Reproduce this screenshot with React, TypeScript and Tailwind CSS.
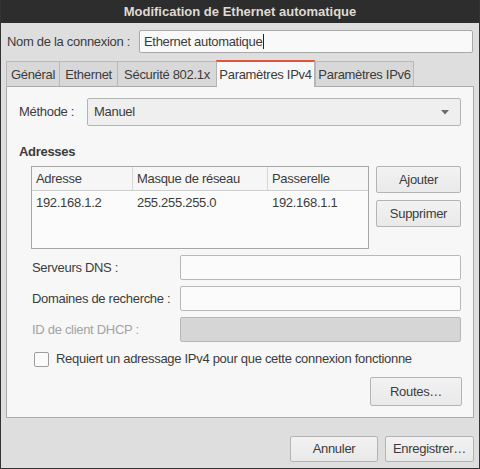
const font = { fontFamily: '"Liberation Sans", Arial, sans-serif' };

function Tab({ label, width, active }: { label: string; width: string; active?: boolean }) {
  if (active) {
    return (
      <div
        className={`${width} h-[27px] -mb-px flex items-center justify-center border-x border-t-2 border-x-[#b4b4b4] border-t-[#e0553a] bg-[#f7f7f7] z-10`}
      >
        {label}
      </div>
    );
  }
  return (
    <div
      className={`${width} h-[26px] mt-[1px] flex items-center justify-center border-l border-t border-[#b9b9b9] bg-[#d8d8d8] last:border-r`}
    >
      {label}
    </div>
  );
}

function Button({ children, className = "" }: { children: React.ReactNode; className?: string }) {
  return (
    <button
      className={`flex items-center justify-center rounded-[2px] border border-[#b4b4b4] bg-gradient-to-b from-[#f2f2f2] to-[#e9e9e9] text-[#3c3c3c] ${className}`}
    >
      {children}
    </button>
  );
}

function Field({ label, disabled }: { label: string; disabled?: boolean }) {
  return (
    <div className="flex items-center h-[25px]">
      <span className={`w-[173px] shrink-0 whitespace-nowrap pl-[25px] ${disabled ? "text-[#a3a3a3]" : ""}`}>
        {label}
      </span>
      <div
        className={`w-[281px] h-[25px] rounded-[2px] border border-[#b8b8b8] ${
          disabled ? "bg-[#d6d6d6]" : "bg-[#fbfbfb]"
        }`}
      />
    </div>
  );
}

export default function App() {
  return (
    <div
      style={font}
      className="w-[480px] h-[469px] flex flex-col overflow-hidden bg-[#dedede] border-x border-b border-[#333333] text-[13px] text-[#3c3c3c] tracking-[-0.3px]"
    >
      <div className="h-[23px] shrink-0 flex items-center justify-center bg-[#2d2d2d] text-[#dfdbd2] font-bold text-[13px] tracking-[0px]">
        Modification de Ethernet automatique
      </div>

      <div className="flex items-center mt-[7px] h-[23px] pl-[6px]">
        <span className="w-[132px]">Nom de la connexion :</span>
        <div className="w-[334px] h-[23px] flex items-center px-[4px] rounded-[2px] border border-[#a9a9a9] bg-[#f9f9f9]">
          Ethernet automatique
          <span className="ml-[1px] w-px h-[15px] bg-[#222]" />
        </div>
      </div>

      <div className="flex mt-[7px] ml-[5px] h-[26px]">
        <Tab label="Général" width="w-[53px]" />
        <Tab label="Ethernet" width="w-[58px]" />
        <Tab label="Sécurité 802.1x" width="w-[99px]" />
        <Tab label="Paramètres IPv4" width="w-[99px]" active />
        <Tab label="Paramètres IPv6" width="w-[99px]" />
      </div>

      <div className="ml-[5px] w-[468px] h-[332px] border border-[#ababab] bg-[#f7f7f7] flex flex-col pl-[12px]">
        <div className="flex items-center mt-[11px] h-[28px]">
          <span className="w-[68px]">Méthode :</span>
          <div className="w-[374px] h-[28px] flex items-center justify-between px-[6px] pr-[11px] rounded-[2px] border border-[#b4b4b4] bg-[#efefef]">
            <span>Manuel</span>
            <svg width="8" height="5" viewBox="0 0 8 5">
              <path d="M0 0 H8 L4 4.5 Z" fill="#6b6b6b" />
            </svg>
          </div>
        </div>

        <div className="mt-[18px] font-bold h-[16px] leading-[16px]">Adresses</div>

        <div className="flex mt-[6px] pl-[12px] gap-[7px]">
          <div className="w-[338px] h-[83px] border border-[#a6a6a6] bg-[#fbfbfb]">
            <div className="flex h-[24px] border-b border-[#cfcfcf] bg-[#f6f6f6]">
              <div className="w-[101px] pl-[4px] flex items-center border-r border-[#d6d6d6]">Adresse</div>
              <div className="w-[135px] pl-[4px] flex items-center border-r border-[#d6d6d6]">Masque de réseau</div>
              <div className="flex-1 pl-[4px] flex items-center">Passerelle</div>
            </div>
            <div className="flex h-[24px]">
              <div className="w-[101px] pl-[4px] flex items-center">192.168.1.2</div>
              <div className="w-[135px] pl-[4px] flex items-center">255.255.255.0</div>
              <div className="flex-1 pl-[4px] flex items-center">192.168.1.1</div>
            </div>
          </div>
          <div className="flex flex-col gap-[7px]">
            <Button className="w-[85px] h-[27px]">Ajouter</Button>
            <Button className="w-[85px] h-[27px]">Supprimer</Button>
          </div>
        </div>

        <div className="flex flex-col gap-[6px] mt-[6px] -ml-[12px]">
          <Field label="Serveurs DNS :" />
          <Field label="Domaines de recherche :" />
          <Field label="ID de client DHCP :" disabled />
        </div>

        <div className="flex items-center mt-[9px] ml-[15px] h-[16px]">
          <div className="w-[15px] h-[15px] rounded-[2px] border border-[#9d9d9d] bg-[#fbfbfb]" />
          <span className="ml-[7px]">Requiert un adressage IPv4 pour que cette connexion fonctionne</span>
        </div>

        <div className="flex justify-end mt-[10px] pr-[11px]">
          <Button className="w-[92px] h-[29px]">Routes…</Button>
        </div>
      </div>

      <div className="flex justify-end gap-[7px] mt-[18px] pr-[5px]">
        <Button className="w-[88px] h-[26px]">Annuler</Button>
        <Button className="w-[89px] h-[26px]">Enregistrer…</Button>
      </div>
    </div>
  );
}
